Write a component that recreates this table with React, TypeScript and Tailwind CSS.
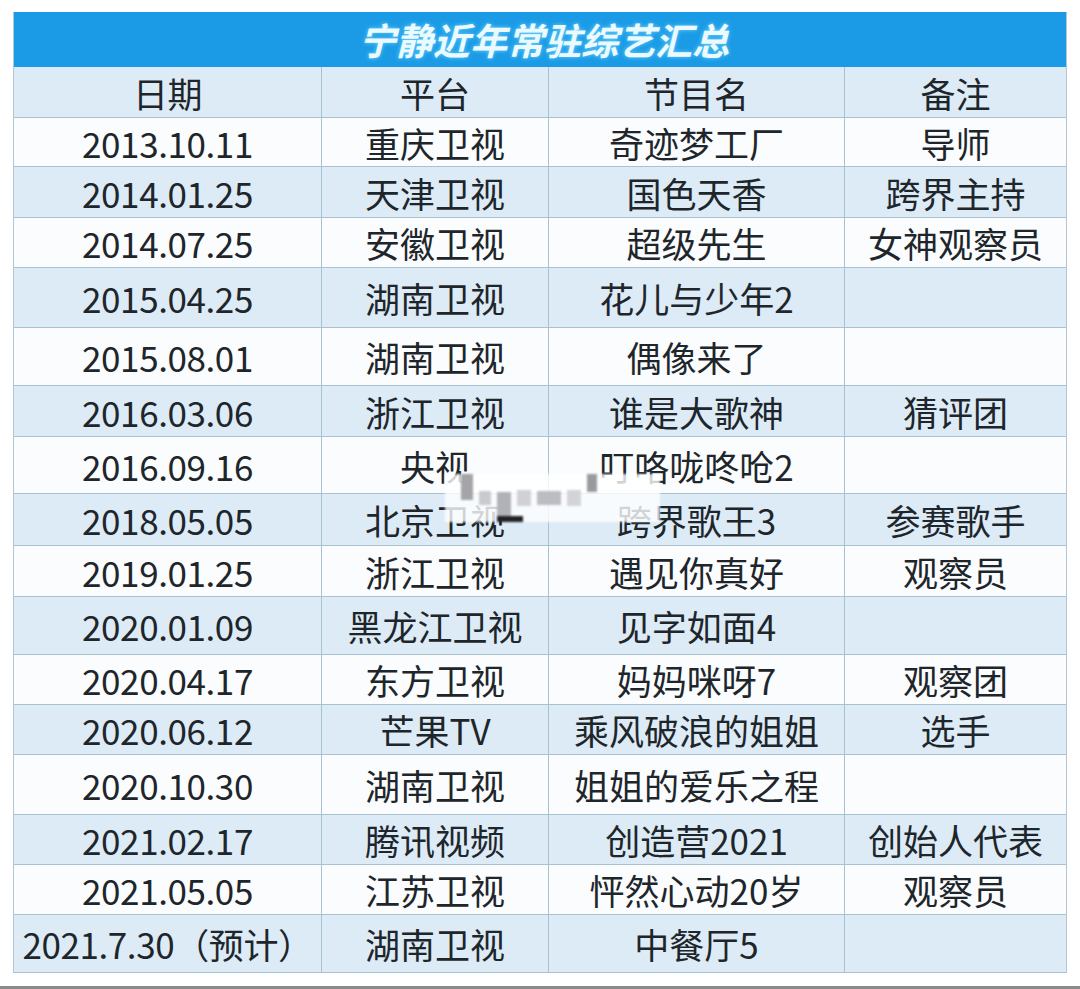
import React from 'react'

type Row = { date: string; platform: string; show: string; note: string; h: string }

const rows: Row[] = [
  { date: '2013.10.11', platform: '重庆卫视', show: '奇迹梦工厂', note: '导师', h: 'h-[49px]' },
  { date: '2014.01.25', platform: '天津卫视', show: '国色天香', note: '跨界主持', h: 'h-[51px]' },
  { date: '2014.07.25', platform: '安徽卫视', show: '超级先生', note: '女神观察员', h: 'h-[50px]' },
  { date: '2015.04.25', platform: '湖南卫视', show: '花儿与少年2', note: '', h: 'h-[60px]' },
  { date: '2015.08.01', platform: '湖南卫视', show: '偶像来了', note: '', h: 'h-[58px]' },
  { date: '2016.03.06', platform: '浙江卫视', show: '谁是大歌神', note: '猜评团', h: 'h-[51px]' },
  { date: '2016.09.16', platform: '央视', show: '叮咯咙咚呛2', note: '', h: 'h-[57px]' },
  { date: '2018.05.05', platform: '北京卫视', show: '跨界歌王3', note: '参赛歌手', h: 'h-[52px]' },
  { date: '2019.01.25', platform: '浙江卫视', show: '遇见你真好', note: '观察员', h: 'h-[51px]' },
  { date: '2020.01.09', platform: '黑龙江卫视', show: '见字如面4', note: '', h: 'h-[58px]' },
  { date: '2020.04.17', platform: '东方卫视', show: '妈妈咪呀7', note: '观察团', h: 'h-[50px]' },
  { date: '2020.06.12', platform: '芒果TV', show: '乘风破浪的姐姐', note: '选手', h: 'h-[50px]' },
  { date: '2020.10.30', platform: '湖南卫视', show: '姐姐的爱乐之程', note: '', h: 'h-[60px]' },
  { date: '2021.02.17', platform: '腾讯视频', show: '创造营2021', note: '创始人代表', h: 'h-[50px]' },
  { date: '2021.05.05', platform: '江苏卫视', show: '怦然心动20岁', note: '观察员', h: 'h-[50px]' },
  { date: '2021.7.30（预计）', platform: '湖南卫视', show: '中餐厅5', note: '', h: 'h-[58px]' },
]

const cell = 'flex items-center justify-center border-r border-[#a9c2d2] whitespace-nowrap'

function TableRow({ cells, h, shaded }: { cells: string[]; h: string; shaded: boolean }) {
  return (
    <div
      className={`flex ${h} border-b border-[#a9c2d2] ${shaded ? 'bg-[#dcebf6]' : 'bg-[#fafcfd]'}`}
    >
      <div className={`${cell} w-[308px] tracking-[-0.4px]`}>{cells[0]}</div>
      <div className={`${cell} w-[227px]`}>{cells[1]}</div>
      <div className={`${cell} w-[296px]`}>{cells[2]}</div>
      <div className={`${cell} w-[221px] border-r-0`}>{cells[3]}</div>
    </div>
  )
}

// pixelated patch pasted over the middle of the table
function Mosaic() {
  return (
    <div className="absolute left-[445px] top-[474px] flex h-[48px] w-[215px] items-center gap-[6px] bg-white/80 px-[16px] blur-[1px]">
      <div className="h-[26px] w-[12px] self-start bg-[#a4a4a9]" />
      <div className="h-[14px] w-[12px] bg-[#c9c9ce]" />
      <div className="flex h-[30px] w-[14px] flex-col justify-end self-end bg-[#b1b1b8]">
        <div className="h-[6px] w-[26px] bg-[#222]" />
      </div>
      <div className="h-[16px] w-[14px] bg-[#d0d0d6]" />
      <div className="h-[14px] w-[24px] bg-[#bcbcc3]" />
      <div className="h-[16px] w-[14px] bg-[#d3d3d8]" />
      <div className="h-[18px] w-[10px] self-start bg-[#9a9a9e]" />
    </div>
  )
}

export default function App() {
  return (
    <div className="relative h-[989px] w-[1080px] bg-white font-['Noto_Sans_CJK_SC','Noto_Sans',sans-serif] text-[#1e262b]">
      <div className="pl-[13px] pt-[12px]">
        <div className="w-[1054px] border-x border-[#b3c6d3] text-[35px] leading-none">
          <div className="flex h-[55px] items-center justify-center bg-[#1b9be6]">
            <span className="pl-2 text-[37px] font-bold italic text-[#eafaff] [text-shadow:0_0_4px_#6fd3ff]">
              宁静近年常驻综艺汇总
            </span>
          </div>
          <TableRow cells={['日期', '平台', '节目名', '备注']} h="h-[51px]" shaded />
          {rows.map((r, i) => (
            <TableRow
              key={r.date}
              cells={[r.date, r.platform, r.show, r.note]}
              h={r.h}
              shaded={i % 2 === 1}
            />
          ))}
        </div>
      </div>

      <Mosaic />

      <div className="absolute bottom-0 left-0 h-[3px] w-full bg-[#8a8a8a]" />
    </div>
  )
}
